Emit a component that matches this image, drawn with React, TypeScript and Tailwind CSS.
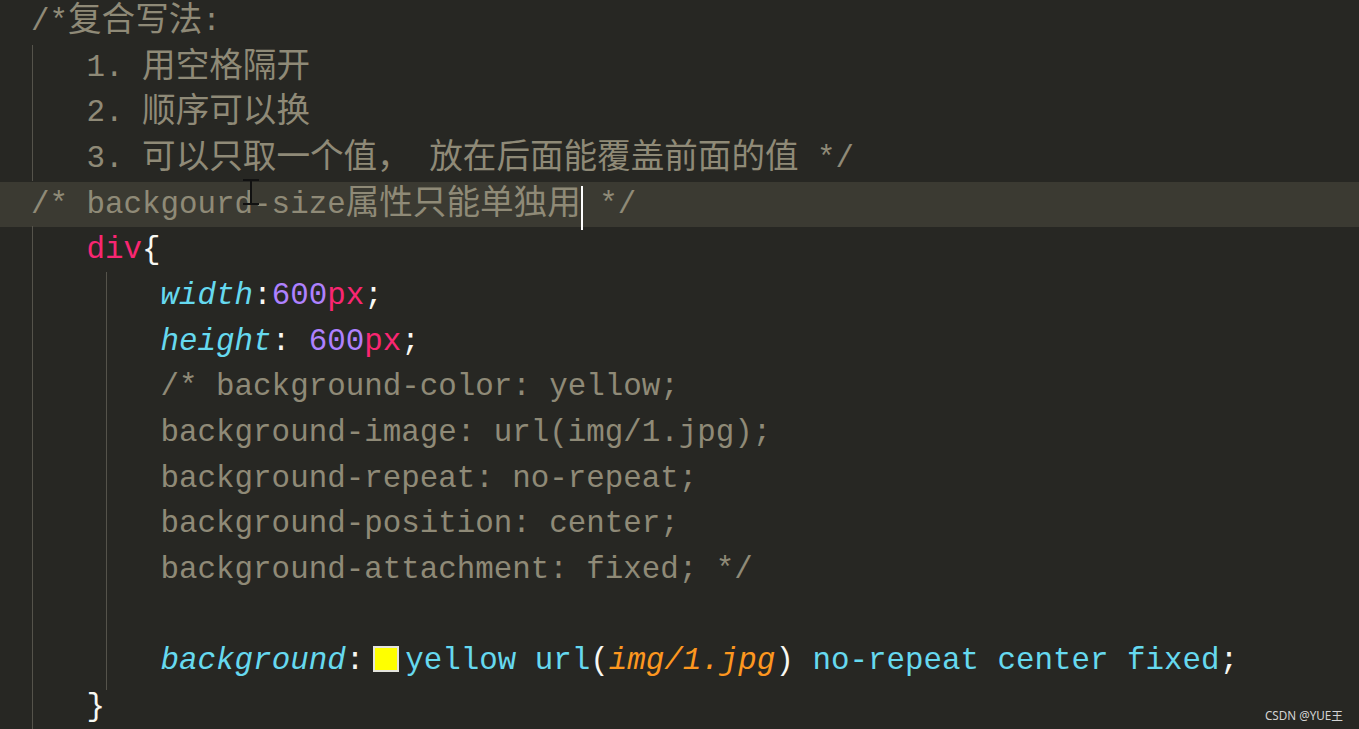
const cjk = "relative top-[1px] text-[33.6px] leading-[0px] font-['Noto_Sans_CJK_SC',sans-serif]";

function Line({ children, active }: { children?: React.ReactNode; active?: boolean }) {
  return (
    <div
      className={
        'h-[45.67px] leading-[45.67px] whitespace-pre pl-[31px] ' + (active ? 'bg-[#3b3a32]' : '')
      }
    >
      {children}
    </div>
  );
}

export default function App() {
  const comment = 'text-[#8f8a77]';
  return (
    <div className="relative w-[1359px] h-[729px] overflow-hidden bg-[#272723] text-[30.85px] font-['Liberation_Mono','Noto_Sans_CJK_SC',monospace] text-[#f8f8f2]">
      <div className="-mt-[1px]">
        <Line>
          <span className={comment}>
            /*<span className={cjk}>复合写法</span>:
          </span>
        </Line>
        <Line>
          <span className={comment}>
            {'   1. '}
            <span className={cjk}>用空格隔开</span>
          </span>
        </Line>
        <Line>
          <span className={comment}>
            {'   2. '}
            <span className={cjk}>顺序可以换</span>
          </span>
        </Line>
        <Line>
          <span className={comment}>
            {'   3. '}
            <span className={cjk}>可以只取一个值，</span> <span className={cjk}>放在后面能覆盖前面的值</span>
            {' */'}
          </span>
        </Line>
        <Line active>
          <span className={comment}>
            /* backgourd-size<span className={cjk}>属性只能单独用</span>
            <span className="relative">
              <span className="absolute left-[0px] top-[-1px] w-[2px] h-[44px] bg-white" />
            </span>
            {' */'}
          </span>
        </Line>
        <Line>
          {'   '}
          <span className="text-[#f92672]">div</span>
          <span>{'{'}</span>
        </Line>
        <Line>
          {'       '}
          <span className="italic text-[#66d9ef]">width</span>:<span className="text-[#ae81ff]">600</span>
          <span className="text-[#f92672]">px</span>;
        </Line>
        <Line>
          {'       '}
          <span className="italic text-[#66d9ef]">height</span>: <span className="text-[#ae81ff]">600</span>
          <span className="text-[#f92672]">px</span>;
        </Line>
        <Line>
          <span className={comment}>{'       /* background-color: yellow;'}</span>
        </Line>
        <Line>
          <span className={comment}>{'       background-image: url(img/1.jpg);'}</span>
        </Line>
        <Line>
          <span className={comment}>{'       background-repeat: no-repeat;'}</span>
        </Line>
        <Line>
          <span className={comment}>{'       background-position: center;'}</span>
        </Line>
        <Line>
          <span className={comment}>{'       background-attachment: fixed; */'}</span>
        </Line>
        <Line />
        <Line>
          {'       '}
          <span className="italic text-[#66d9ef]">background</span>:
          <span className="inline-block align-middle ml-[9px] mr-[6px] w-[26px] h-[26px] -mt-[4px] bg-[#ffff00] border-2 border-[#e4e4dc]" />
          <span className="text-[#66d9ef]">yellow url</span>(
          <span className="italic text-[#fd971f]">img/1.jpg</span>)
          <span className="text-[#66d9ef]"> no-repeat center fixed</span>;
        </Line>
        <Line>{'   }'}</Line>
      </div>

      {/* indent guides */}
      <div className="absolute left-[32px] top-[45px] w-px h-[136px] bg-[#55534b]" />
      <div className="absolute left-[32px] top-[226px] w-px h-[503px] bg-[#55534b]" />
      <div className="absolute left-[106px] top-[272px] w-px h-[418px] bg-[#55534b]" />

      {/* mouse I-beam */}
      <div className="absolute left-[243px] top-[179px] w-[16px] h-[26px] flex flex-col items-center">
        <div className="w-full h-[2px] bg-[#111]" />
        <div className="w-[2px] flex-1 bg-[#111]" />
        <div className="w-full h-[2px] bg-[#111]" />
      </div>

      <div className="absolute right-[16px] bottom-[7px] text-[11.7px] leading-[14px] text-[#d4d4d4] font-['Noto_Sans','Noto_Sans_CJK_SC',sans-serif]">
        CSDN @YUE王
      </div>
    </div>
  );
}
